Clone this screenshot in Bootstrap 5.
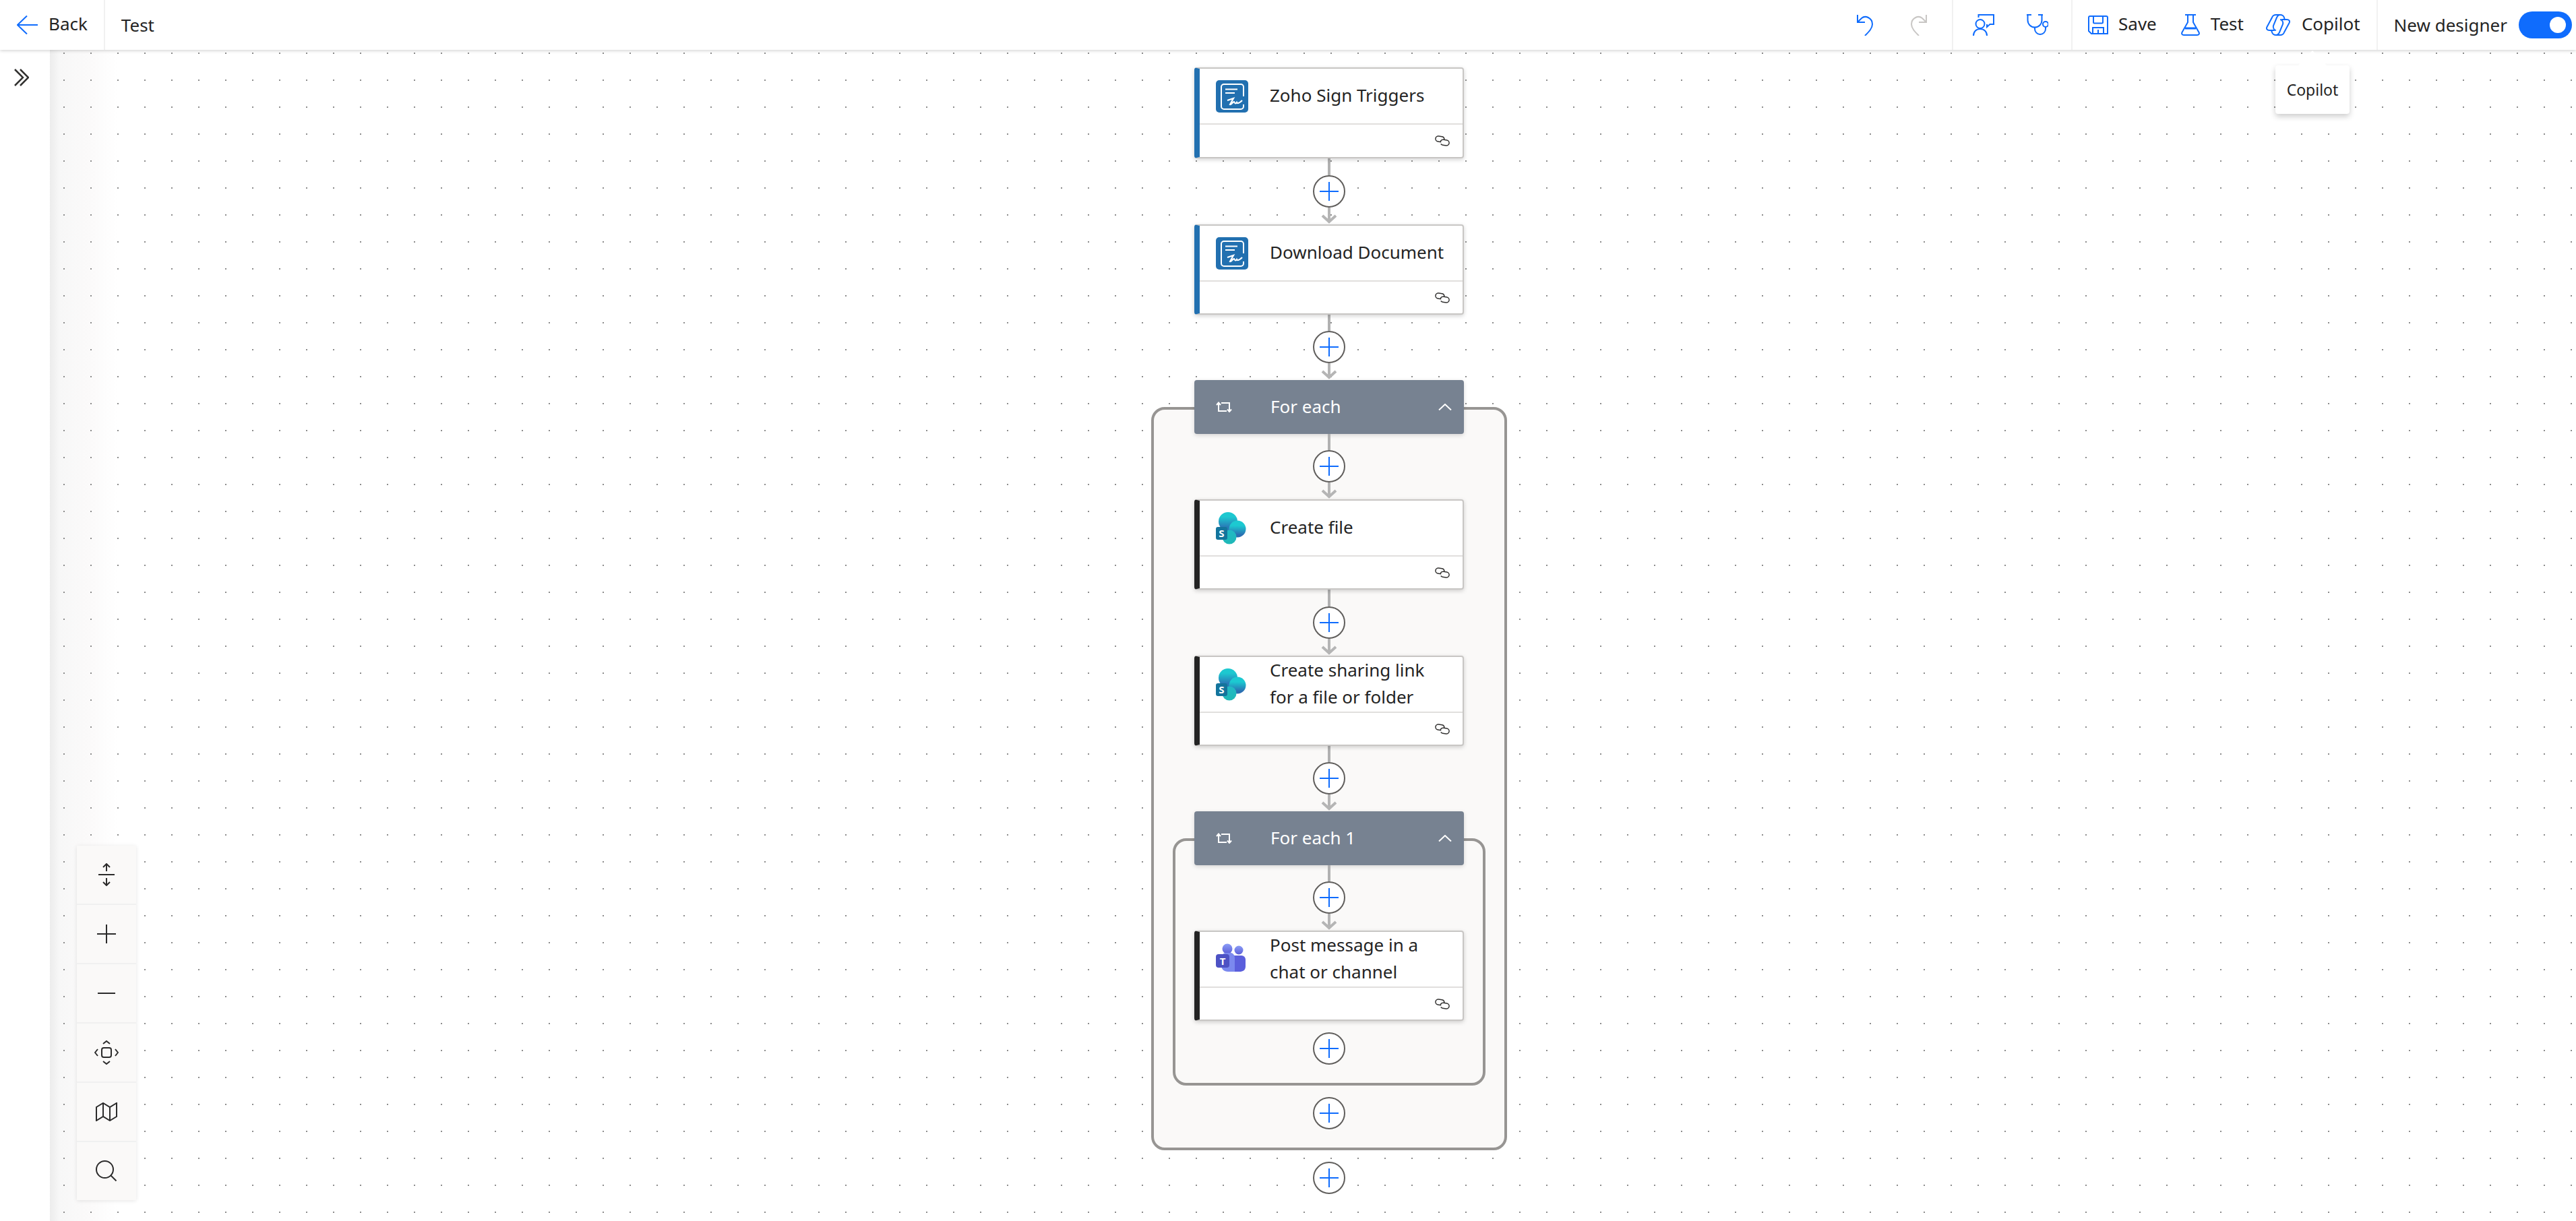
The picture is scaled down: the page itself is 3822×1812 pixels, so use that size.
<!DOCTYPE html>
<html lang="en">
<head>
<meta charset="utf-8">
<title>Test</title>
<link href="https://cdn.jsdelivr.net/npm/bootstrap@5.3.0/dist/css/bootstrap.min.css" rel="stylesheet">
<style>
:root{--az:#0f6cfd;--ink:#242424;}
html,body{height:100%;overflow:hidden;}
body{font-family:"Noto Sans","Open Sans",sans-serif;font-size:26px;color:var(--ink);background:#fff;}
.topbar{height:74px;padding:0;flex:none;flex-wrap:nowrap;background:#fff;box-shadow:0 1px 5px rgba(0,0,0,.2);z-index:5;position:relative;}
.tsep{width:2px;height:74px;background:#f1f1f1;flex:none;}
.tbtn{display:flex;align-items:center;padding:0;border:0;background:none;color:var(--ink);font-size:26px;line-height:70px;height:74px;}
.tbtn svg{display:block;flex:none;fill:none;stroke:var(--az);stroke-width:2;}
.tbtn.off svg{stroke:#c8c6c4;}
.tbtn span{white-space:nowrap;display:block;height:74px;}
.gap-15{margin-left:15px;}
.gap-16{margin-left:16px;}
.gap-17{margin-left:17px;}
.m23{margin-left:23px;}.m24{margin-left:24px;}.m25{margin-left:25px;}.m29{margin-left:29px;}.m33{margin-left:33px;}.m34{margin-left:34px;}.m36{margin-left:36px;}.m48{margin-left:48px;}.m54{margin-left:54px;}
.switch-wrap{padding:0;margin:0 6px 0 17px;min-height:0;display:flex;}
.form-switch.switch-wrap .form-check-input{width:79px;height:40px;margin:0;border:0;background-color:var(--az);background-size:32px 32px;background-position:right 5px center;border-radius:20px;}
.hint{position:absolute;left:3376px;top:97px;width:110px;height:72px;background:#fff;border-radius:4px;box-shadow:0 4px 9px rgba(0,0,0,.2);font-size:23px;text-align:center;line-height:72px;z-index:6;}
.hint::before{content:"";position:absolute;left:33px;top:-22px;width:44px;height:23px;background:#fff;clip-path:polygon(50% 0,100% 100%,0 100%);}
.stage{flex:1 1 0;min-height:0;overflow:hidden;}
.rail{width:74px;flex:none;background:#fff;padding:28px 0 0 21px;}
.canvasarea{flex:1 1 auto;position:relative;overflow:hidden;background-color:#fff;
 background-image:radial-gradient(circle at center,#8c8c8c 1px,transparent 1.4px),linear-gradient(90deg,#ececec 0,#f7f7f7 14px,#fbfafa 60px,#fff 100px);
 background-size:40px 40px,100% 100%;background-position:1px -15px,0 0;}
.flowcol{width:528px;margin-left:1634px;padding-top:26px;display:flex;flex-direction:column;align-items:center;}
.flownode{width:400px;height:134px;flex:none;border:2px solid #c8c6c4;border-left:8px solid #232323;border-radius:4px;background:#fff;box-shadow:0 2px 6px rgba(0,0,0,.18);}
.flownode.zoho{border-left-color:#2270b0;}
.flownode.tall{height:135px;}
.nodehead{height:81px;display:flex;align-items:center;border-bottom:2px solid #e1dfdd;flex:none;padding-left:24px;box-sizing:content-box;}
.nodehead svg{flex:none;display:block;margin-right:32px;}
.nodetext{font-size:26px;line-height:40px;white-space:nowrap;margin-top:-3px;}
.nodefoot{flex:1 1 auto;display:flex;align-items:center;justify-content:flex-end;padding-right:18px;}
.conn{height:97px;width:48px;flex:none;display:flex;flex-direction:column;align-items:center;}
.conn.big{height:98px;}
.wire{width:4px;flex:1 1 auto;background:#b1b1b1;}
.addbtn{width:48px;height:48px;flex:none;border:2px solid #605e5c;border-radius:50%;background:#fff;padding:0;display:flex;align-items:center;justify-content:center;}
.addbtn svg{display:block;}
.loopbox{border:4px solid #979593;border-radius:20px;background:#faf9f8;display:flex;flex-direction:column;align-items:center;margin-top:40px;flex:none;}
.loopbox.outer{width:528px;padding-bottom:27px;}
.loopbox.inner{width:464px;padding-bottom:27px;}
.loophead{width:400px;height:80px;flex:none;margin-top:-44px;background:#778291;border-radius:4px;color:#fff;display:flex;align-items:center;box-shadow:0 2px 6px rgba(0,0,0,.15);padding:0 18px 0 32px;}
.loophead svg{display:block;flex:none;}
.loophead .nodetext{margin-left:57px;flex:1 1 auto;}
.loneadd{margin-top:17px;}
.loopbox.inner + .addbtn{margin-top:17px;}
.loopbox.outer + .addbtn{margin-top:17px;}
.viewtools{position:absolute;left:40px;bottom:31px;width:88px;background:#f0f0f0;box-shadow:0 1px 6px rgba(0,0,0,.1);gap:2px;}
.viewtools .btn{width:88px;height:86px;border:0;border-radius:0;background:#faf9f8;padding:0;display:flex;align-items:center;justify-content:center;}
.viewtools svg{display:block;fill:none;stroke:#2b2b2b;stroke-width:2;}
</style>
</head>
<body class="d-flex flex-column">

<svg width="0" height="0" class="position-absolute">
 <defs>
  <linearGradient id="spA" x1="0" y1="0" x2="0" y2="1"><stop offset=".25" stop-color="#1dc8d0"/><stop offset=".8" stop-color="#2a78b6"/></linearGradient>
  <linearGradient id="spB" x1="0" y1="0" x2="0" y2="1"><stop offset=".3" stop-color="#1cc9d1"/><stop offset=".85" stop-color="#2b6fb2"/></linearGradient>
  <linearGradient id="spC" x1="0" y1="0" x2="0" y2="1"><stop offset=".1" stop-color="#21b9c4"/><stop offset=".9" stop-color="#1fb8b8"/></linearGradient>
  <linearGradient id="tmA" x1="0" y1="0" x2="0" y2="1"><stop offset="0" stop-color="#8a9cf6"/><stop offset="1" stop-color="#5c5fd8"/></linearGradient>
  <symbol id="zoho" viewBox="0 0 48 48">
   <rect width="48" height="48" rx="5" fill="#2270b0"/>
   <path d="M41 24V10a4 4 0 0 0-4-4H12a4 4 0 0 0-4 4v29a4 4 0 0 0 4 4h25a4 4 0 0 0 4-4v-3" fill="none" stroke="#fff" stroke-width="2"/>
   <path d="M14 13.5h18M14 19h14" fill="none" stroke="#fff" stroke-width="2"/>
   <path d="M17 30l9-3-5 9c2 1 4-4 6-4 1 3 3 3 4 1 1 2 4 1 8-3" fill="none" stroke="#fff" stroke-width="2.2"/>
  </symbol>
  <symbol id="share" viewBox="0 0 48 48">
   <circle cx="18" cy="14" r="14" fill="url(#spA)"/>
   <circle cx="32" cy="25" r="12.5" fill="url(#spB)"/>
   <circle cx="20" cy="37" r="10.5" fill="url(#spC)"/>
   <rect x="0" y="22" width="17" height="19" rx="3" fill="#13749c"/>
   <text x="8.5" y="37" text-anchor="middle" font-family="Noto Sans, sans-serif" font-size="15" font-weight="700" fill="#fff">S</text>
  </symbol>
  <symbol id="teams" viewBox="0 0 48 48">
   <circle cx="34" cy="10" r="6.5" fill="url(#tmA)"/>
   <circle cx="17" cy="8" r="7.5" fill="url(#tmA)"/>
   <path d="M24 18h14a6 6 0 0 1 6 6v10c0 6-4 8-9 8H24z" fill="#5b5fdc"/>
   <path d="M8 22c0-5 3-8 8-8h6c3 0 6 3 6 8v20h-10c-6 0-10-4-10-9z" fill="#7b89ee"/>
   <rect x="0" y="16" width="20" height="20" rx="4" fill="#4d52c4"/>
   <text x="10" y="32" text-anchor="middle" font-family="Noto Sans, sans-serif" font-size="15" font-weight="700" fill="#fff">T</text>
  </symbol>
  <symbol id="link" viewBox="0 0 24 16">
   <g transform="rotate(9 12 8)" fill="none" stroke="#323130" stroke-width="1.5">
    <path d="M10.5 10H5.5a4 4 0 0 1 0-8h5a4 4 0 0 1 4 3.800"/>
    <path d="M9.500 10a4 4 0 0 1 4-4h5a4 4 0 0 1 0 8h-5a4 4 0 0 1-3-1.200"/>
   </g>
  </symbol>
  <symbol id="plus" viewBox="0 0 28 28"><path d="M14 0v28M0 14h28" fill="none" stroke="#0f6cfd" stroke-width="2"/></symbol>
  <symbol id="tipdown" viewBox="0 0 24 25"><path d="M12 0v22M2 12l10 9 10-9" fill="none" stroke="#b5b5b5" stroke-width="4"/></symbol>
  <symbol id="rep" viewBox="0 0 24 16">
   <path d="M4 15V2M1 5l3-3.500L7 5M8 2h12v13M17 11.500l3 3.500 3-3.500M4 14h12" fill="none" stroke="#fff" stroke-width="2"/>
  </symbol>
  <symbol id="up" viewBox="0 0 20 10"><path d="M1 9.500l9-8.500 9 8.500" fill="none" stroke="#fff" stroke-width="2"/></symbol>
 </defs>
</svg>

<nav class="navbar topbar d-flex justify-content-start">
  <button class="tbtn m25" type="button">
    <svg width="32" height="28" viewBox="0 0 32 28"><path d="M31 14H1M15 0.500L1 14l14 13.500"/></svg>
    <span class="gap-15">Back</span>
  </button>
  <div class="tsep m24"></div>
  <span class="tbtn m24">Test</span>

  <div class="d-flex align-items-center ms-auto">
    <button class="tbtn" type="button" aria-label="Undo"><svg width="28" height="32" viewBox="0 0 28 32"><path d="M4 1v11h11M4 12l6-6c6-5 16 0 16 9 0 6-5 11-11 17"/></svg></button>
    <button class="tbtn off m54" type="button" aria-label="Redo"><svg width="28" height="32" viewBox="0 0 28 32"><path d="M24 1v11H13M24 12l-6-6C12 1 2 6 2 15c0 6 5 11 11 17"/></svg></button>
    <div class="tsep m34"></div>
    <button class="tbtn m29" type="button" aria-label="Comments"><svg width="32" height="32" viewBox="0 0 32 32"><path d="M8.500 5V1H31v14h-5.500l-4.500 4v-4"/><circle cx="11" cy="14.500" r="6.500"/><path d="M1 32c0-6 4-10 10-10s10 4 10 10"/></svg></button>
    <button class="tbtn m48" type="button" aria-label="Flow checker"><svg width="32" height="32" viewBox="0 0 32 32"><path d="M0 1h7M17 1h7M1.500 1v8a10.500 10.500 0 0 0 21 0V1M12 19.500V22a8 8 0 0 0 16 0v-3"/><circle cx="28" cy="15" r="4"/></svg></button>
    <div class="tsep m34"></div>
    <button class="tbtn m23" type="button"><svg width="30" height="28" viewBox="0 0 30 28"><path d="M1 3a2 2 0 0 1 2-2h24a2 2 0 0 1 2 2v24H5l-4-4zM8 1v9a1.500 1.500 0 0 0 1.500 1.500h11a1.500 1.500 0 0 0 1.500-1.500V1M7 27V18h16v9M15 21v6"/></svg><span class="gap-15">Save</span></button>
    <button class="tbtn m36" type="button"><svg width="28" height="32" viewBox="0 0 28 32"><path d="M6 1h16M10 1v11L1.500 27c-1 2 0 4 2.500 4h20c2.500 0 3.500-2 2.500-4L18 12V1"/><path d="M6 21h16" stroke-width="3"/></svg><span class="gap-16">Test</span></button>
    <button class="tbtn m33" type="button"><svg width="36" height="32" viewBox="0 0 36 32"><path d="M28 9l-1-4c-1-3-3-4-6-4h-6c-3 0-5 1-6 4L1.500 19c-1.500 3 .5 5 3.500 5h8"/><path d="M8 24l1 3c1 3 3 4 6 4h6c3 0 5-1 6-4l7.500-14c1.500-3-.5-5-3.500-5h-8"/><path d="M21 1c-3 0-4 2-5 4l-5 12c-1 3 1 7 4 7"/><path d="M15 31c3 0 4-2 5-4l5-12c1-3-1-7-4-7"/></svg><span class="gap-17">Copilot</span></button>
    <div class="tsep m24"></div>
    <span class="tbtn m24">New designer</span>
    <div class="form-check form-switch switch-wrap"><input class="form-check-input" type="checkbox" role="switch" checked aria-label="New designer"></div>
  </div>
</nav>
<div class="hint">Copilot</div>

<div class="d-flex stage">
  <aside class="rail">
    <svg class="d-block" width="22" height="26" viewBox="0 0 22 26" fill="none" stroke="#323130" stroke-width="2.500"><path d="M1 1l12 12L1 25M9 1l12 12L9 25"/></svg>
  </aside>
  <main class="canvasarea">
    <div class="flowcol">

      <div class="card flownode zoho tall">
        <div class="nodehead"><svg width="48" height="48"><use href="#zoho"/></svg><span class="nodetext">Zoho Sign Triggers</span></div>
        <div class="nodefoot"><svg width="24" height="16"><use href="#link"/></svg></div>
      </div>
      <div class="conn big"><div class="wire"></div><button class="addbtn" type="button" aria-label="Add"><svg width="28" height="28"><use href="#plus"/></svg></button><svg width="24" height="25"><use href="#tipdown"/></svg></div>

      <div class="card flownode zoho">
        <div class="nodehead"><svg width="48" height="48"><use href="#zoho"/></svg><span class="nodetext">Download Document</span></div>
        <div class="nodefoot"><svg width="24" height="16"><use href="#link"/></svg></div>
      </div>
      <div class="conn"><div class="wire"></div><button class="addbtn" type="button" aria-label="Add"><svg width="28" height="28"><use href="#plus"/></svg></button><svg width="24" height="25"><use href="#tipdown"/></svg></div>

      <div class="loopbox outer">
        <div class="loophead"><svg width="24" height="16"><use href="#rep"/></svg><span class="nodetext">For each</span><svg width="20" height="10"><use href="#up"/></svg></div>
        <div class="conn"><div class="wire"></div><button class="addbtn" type="button" aria-label="Add"><svg width="28" height="28"><use href="#plus"/></svg></button><svg width="24" height="25"><use href="#tipdown"/></svg></div>

        <div class="card flownode">
          <div class="nodehead"><svg width="48" height="48"><use href="#share"/></svg><span class="nodetext">Create file</span></div>
          <div class="nodefoot"><svg width="24" height="16"><use href="#link"/></svg></div>
        </div>
        <div class="conn big"><div class="wire"></div><button class="addbtn" type="button" aria-label="Add"><svg width="28" height="28"><use href="#plus"/></svg></button><svg width="24" height="25"><use href="#tipdown"/></svg></div>

        <div class="card flownode">
          <div class="nodehead"><svg width="48" height="48"><use href="#share"/></svg><span class="nodetext">Create sharing link<br>for a file or folder</span></div>
          <div class="nodefoot"><svg width="24" height="16"><use href="#link"/></svg></div>
        </div>
        <div class="conn"><div class="wire"></div><button class="addbtn" type="button" aria-label="Add"><svg width="28" height="28"><use href="#plus"/></svg></button><svg width="24" height="25"><use href="#tipdown"/></svg></div>

        <div class="loopbox inner">
          <div class="loophead"><svg width="24" height="16"><use href="#rep"/></svg><span class="nodetext">For each 1</span><svg width="20" height="10"><use href="#up"/></svg></div>
          <div class="conn"><div class="wire"></div><button class="addbtn" type="button" aria-label="Add"><svg width="28" height="28"><use href="#plus"/></svg></button><svg width="24" height="25"><use href="#tipdown"/></svg></div>

          <div class="card flownode">
            <div class="nodehead"><svg width="48" height="48"><use href="#teams"/></svg><span class="nodetext">Post message in a<br>chat or channel</span></div>
            <div class="nodefoot"><svg width="24" height="16"><use href="#link"/></svg></div>
          </div>
          <button class="addbtn loneadd" type="button" aria-label="Add"><svg width="28" height="28"><use href="#plus"/></svg></button>
        </div>
        <button class="addbtn" type="button" aria-label="Add"><svg width="28" height="28"><use href="#plus"/></svg></button>
      </div>
      <button class="addbtn" type="button" aria-label="Add"><svg width="28" height="28"><use href="#plus"/></svg></button>

    </div>

    <div class="viewtools d-flex flex-column">
      <button class="btn" type="button" aria-label="Fit"><svg width="24" height="34" viewBox="0 0 24 34"><path d="M0 17h24M12 1v11M7 6l5-5 5 5M12 22v11M7 28l5 5 5-5"/></svg></button>
      <button class="btn" type="button" aria-label="Zoom in"><svg width="28" height="28" viewBox="0 0 28 28"><path d="M14 0v28M0 14h28"/></svg></button>
      <button class="btn" type="button" aria-label="Zoom out"><svg width="26" height="4" viewBox="0 0 26 4"><path d="M0 2h26"/></svg></button>
      <button class="btn" type="button" aria-label="Center"><svg width="36" height="36" viewBox="0 0 36 36"><rect x="11" y="11" width="14" height="14" rx="3"/><path d="M13 5l5-4 5 4M13 31l5 4 5-4M5 13l-4 5 4 5M31 13l4 5-4 5"/></svg></button>
      <button class="btn" type="button" aria-label="Map"><svg width="32" height="28" viewBox="0 0 32 28"><path d="M1 7l10-6 10 6 10-6v20l-10 6-10-6-10 6zM11 1v20M21 7v20"/></svg></button>
      <button class="btn" type="button" aria-label="Search"><svg width="32" height="32" viewBox="0 0 32 32"><circle cx="13.500" cy="13.500" r="12.500"/><path d="M22.500 22.500l8 8"/></svg></button>
    </div>
  </main>
</div>

<script src="https://cdn.jsdelivr.net/npm/bootstrap@5.3.0/dist/js/bootstrap.bundle.min.js"></script>
</body>
</html>
